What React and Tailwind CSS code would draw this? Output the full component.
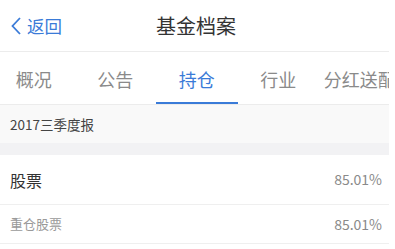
export default function App() {
  const tabs = ["概况", "公告", "持仓", "行业", "分红送配"];
  return (
    <div
      className="w-[395px] h-[249px] bg-white overflow-hidden"
      style={{ fontFamily: '"Noto Sans CJK SC", "Noto Sans", sans-serif' }}
    >
      <div className="w-[389px]">
        <div className="relative h-[52px] flex items-center border-b border-[#ececec]">
          <div className="flex items-center pl-[10px] text-[#3a7bd8]">
            <svg width="12" height="20" viewBox="0 0 12 20" className="mr-[5px]">
              <path d="M10 2 L2.5 10 L10 18" fill="none" stroke="#3a7bd8" strokeWidth="1.8" />
            </svg>
            <span className="text-[17.5px] leading-none">返回</span>
          </div>
          <div className="absolute left-0 right-0 top-0 h-full flex items-center justify-center pointer-events-none">
            <span className="text-[20px] text-[#333] leading-none ml-[3px]">基金档案</span>
          </div>
        </div>
        <div className="h-[53px] flex border-b border-[#ececec] overflow-hidden">
          <div className="flex -ml-[7px] shrink-0">
            {tabs.map((t, i) => (
              <div
                key={t}
                className={
                  "relative shrink-0 w-[81.5px] h-[53px] flex items-center justify-center text-[18px] leading-none " +
                  (i === 2 ? "text-[#3a7bd8]" : "text-[#8a8a8a]")
                }
              >
                <span className="whitespace-nowrap">{t}</span>
                {i === 2 && (
                  <div className="absolute left-0 right-0 bottom-[1px] h-[2.5px] bg-[#3a7bd8]" />
                )}
              </div>
            ))}
          </div>
        </div>
        <div className="h-[38px] bg-[#f9f9f9] flex items-center pl-[10px] text-[13.5px] text-[#444]">
          2017三季度报
        </div>
        <div className="h-[12px] bg-[#f2f2f4]" />
        <div className="h-[50px] flex items-center justify-between pl-[10px] pr-[7px] border-b border-[#efefef]">
          <span className="text-[16px] text-[#333]">股票</span>
          <span className="text-[14px] text-[#8a8a8a]">85.01%</span>
        </div>
        <div className="h-[39px] flex items-center justify-between pl-[10px] pr-[7px] border-b border-[#efefef]">
          <span className="text-[13px] text-[#9a9a9a]">重仓股票</span>
          <span className="text-[14px] text-[#8a8a8a]">85.01%</span>
        </div>
      </div>
    </div>
  );
}
